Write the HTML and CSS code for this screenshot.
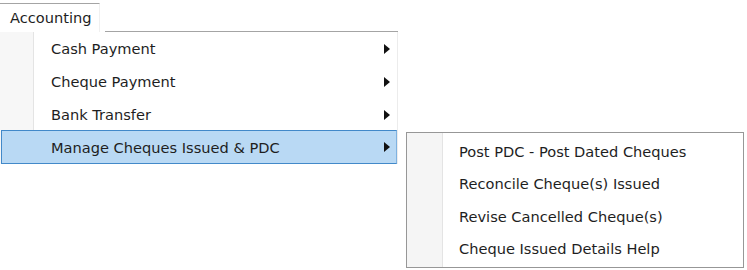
FILE: index.html
```html
<!DOCTYPE html>
<html lang="en">
<head>
    <meta charset="UTF-8">
    <title>Accounting menu</title>
    <link rel="stylesheet" href="styles.css">
</head>
<body>
    <div class="menubar">
        <div class="tab">Accounting</div>
        <div class="tab-rest"></div>
    </div>

    <div class="menu">
        <div class="item">Cash Payment<span class="arrow"></span></div>
        <div class="item">Cheque Payment<span class="arrow"></span></div>
        <div class="item">Bank Transfer<span class="arrow"></span></div>
        <div class="item active">Manage Cheques Issued &amp; PDC<span class="arrow"></span></div>
    </div>

    <div class="submenu">
        <div class="sub-item">Post PDC - Post Dated Cheques</div>
        <div class="sub-item">Reconcile Cheque(s) Issued</div>
        <div class="sub-item">Revise Cancelled Cheque(s)</div>
        <div class="sub-item">Cheque Issued Details Help</div>
    </div>
</body>
</html>
```

FILE: styles.css
```css
body {
    margin: 0;
    background: #fff;
    font-family: "DejaVu Sans", sans-serif;
    font-size: 14.6px;
    color: #1e1e1e;
    width: 747px;
    height: 270px;
    position: relative;
    overflow: hidden;
}
.menubar {
    display: flex;
    width: 398px;
    height: 32px;
}
.tab {
    width: 89px;
    margin-top: 3px;
    padding-left: 10px;
    border-top: 1px solid #a4a4a4;
    border-right: 1px solid #f0f0f0;
    line-height: 27px;
}
.tab-rest {
    flex: 1;
    margin-left: 5px;
    border-bottom: 1px solid #a4a4a4;
}
.menu {
    width: 397px;
    border-right: 1px solid #ececec;
    background: linear-gradient(to right, #f7f7f7 0, #f7f7f7 33px, #e4e4e4 33px, #e4e4e4 34px, #fff 34px);
}
.item {
    display: flex;
    align-items: center;
    justify-content: space-between;
    height: 33px;
    padding: 0 7px 0 51px;
}
.item.active {
    height: 32px;
    background: #b9d9f4;
    border: 1px solid #4289c9;
    border-right-color: #7fb2e0;
    padding: 0 6px 0 49px;
    margin: -1px 0 0 1px;
}
.arrow {
    width: 0;
    height: 0;
    border-top: 5px solid transparent;
    border-bottom: 5px solid transparent;
    border-left: 6px solid #111;
}
.submenu {
    position: absolute;
    left: 406px;
    top: 132px;
    width: 338px;
    height: 136px;
    box-sizing: border-box;
    padding-top: 3px;
    border: 1px solid #979797;
    background: linear-gradient(to right, #f5f5f5 0, #f5f5f5 35px, #e4e4e4 35px, #e4e4e4 36px, #fff 36px);
}
.sub-item {
    height: 32.3px;
    line-height: 32px;
    padding-left: 52px;
}
```
